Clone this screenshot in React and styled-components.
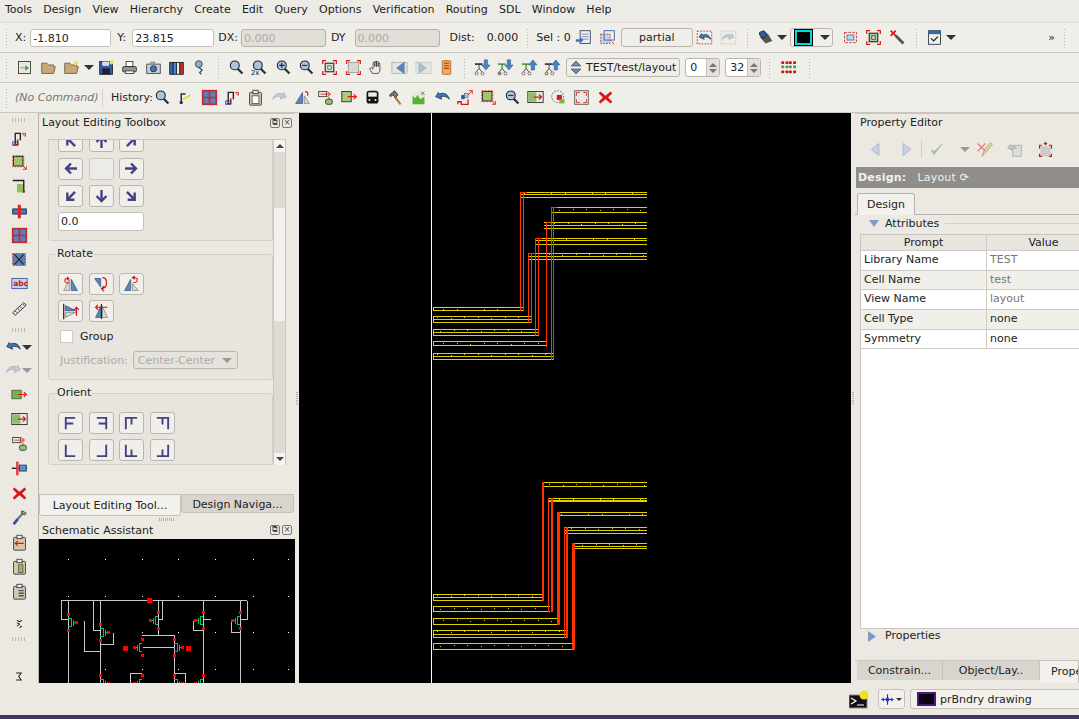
import React from "react";
import styled, { createGlobalStyle } from "styled-components";

const GlobalStyle = createGlobalStyle`
  html, body { margin: 0; padding: 0; overflow: hidden; }
  body { background: #ece9e3; }
  * { box-sizing: border-box; }
`;

const Page = styled.div`
  width: 1079px;
  height: 719px;
  display: flex;
  flex-direction: column;
  background: #ece9e3;
  font-family: "DejaVu Sans", sans-serif;
  font-size: 11px;
  color: #222;
  overflow: hidden;
`;

const MenuBar = styled.div`
  height: 23px;
  display: flex;
  align-items: center;
  gap: 11.2px;
  padding: 0 0 3px 5px;
  background: #ecebe5;
  border-bottom: 1px solid #dcd9d2;
`;

const ToolRow = styled.div`
  height: 30px;
  display: flex;
  align-items: center;
  background: #f0eee8;
  border-bottom: 1px solid #c9c6bf;
  white-space: nowrap;
`;

const Grip = styled.span`
  flex: none;
  width: ${(p) => p.$w || 13}px;
  height: 20px;
  background: radial-gradient(circle at 50% 50%, #b9b6ae 0.8px, transparent 1px);
  background-size: 3px 3px;
  background-position: ${(p) => p.$x || 5}px 0;
  background-repeat: repeat-y;
`;

const IconBtn = styled.span`
  flex: none;
  width: ${(p) => p.$w || 23.5}px;
  height: 22px;
  display: flex;
  align-items: center;
  justify-content: center;
`;

const IconSvg = styled.svg`
  width: ${(p) => p.$s || 17}px;
  height: ${(p) => p.$s || 17}px;
  display: block;
  flex: none;
`;

const Caret = styled.span`
  flex: none;
  width: ${(p) => (p.$small ? 6 : 10)}px;
  height: ${(p) => (p.$small ? 3 : 5)}px;
  margin: 0 1px 0 ${(p) => p.$ml || 0}px;
  border-left: ${(p) => (p.$small ? 3 : 5)}px solid transparent;
  border-right: ${(p) => (p.$small ? 3 : 5)}px solid transparent;
  border-top: ${(p) => (p.$small ? 3 : 5)}px solid ${(p) => (p.$dim ? "#999" : "#333")};
`;

const Text = styled.span`
  flex: none;
  width: ${(p) => (p.$w ? `${p.$w}px` : "auto")};
  margin-left: ${(p) => p.$ml || 0}px;
  color: ${(p) => p.$color || "#222"};
  font-style: ${(p) => (p.$italic ? "italic" : "normal")};
`;

const Field = styled.div`
  flex: none;
  width: ${(p) => p.$w}px;
  height: ${(p) => p.$h || 18}px;
  margin-left: ${(p) => p.$ml || 0}px;
  margin-top: ${(p) => p.$mt || 0}px;
  padding-left: 2px;
  line-height: ${(p) => (p.$h || 18) - 1}px;
  background: ${(p) => (p.$off ? "#e2dfd9" : "#fff")};
  color: ${(p) => (p.$off ? "#aaa" : "#222")};
  border: 1px solid ${(p) => (p.$off ? "#b5b2ab" : "#c4c1ba")};
  border-radius: 3px;
`;

const PushBtn = styled.div`
  flex: none;
  width: ${(p) => p.$w}px;
  height: 19px;
  margin-left: ${(p) => p.$ml || 0}px;
  display: flex;
  align-items: center;
  justify-content: center;
  gap: 4px;
  background: #f0eee9;
  border: 1px solid #b9b6af;
  border-radius: 3px;
`;

const Spin = styled.div`
  flex: none;
  width: ${(p) => p.$w}px;
  height: 19px;
  margin-left: 5px;
  display: flex;
  background: #fff;
  border: 1px solid #b9b6af;
  border-radius: 3px;
  overflow: hidden;
`;

const SpinValue = styled.span`
  flex: 1;
  padding-left: 4px;
  line-height: 17px;
`;

const SpinArrows = styled.span`
  flex: none;
  width: 13px;
  display: flex;
  flex-direction: column;
  align-items: center;
  justify-content: center;
  gap: 2px;
  background: #e4e1db;
  border-left: 1px solid #c4c1ba;

  &::before, &::after {
    content: "";
    border-left: 4px solid transparent;
    border-right: 4px solid transparent;
  }
  &::before { border-bottom: 4px solid #777; }
  &::after { border-top: 4px solid #777; }
`;

const ColorCombo = styled.div`
  flex: none;
  width: 43px;
  height: 19px;
  margin-left: 2px;
  display: flex;
  align-items: center;
  gap: 8px;
  padding-left: 4px;
  background: #f0eee9;
  border: 1px solid #b9b6af;
  border-radius: 3px;
`;

const ColorSwatch = styled.span`
  flex: none;
  width: 17px;
  height: 15px;
  background: #000;
  border: 2px solid #00d8e0;
  outline: 1px solid #000;
`;

const Main = styled.div`
  height: 570px;
  display: flex;
`;

const LeftStrip = styled.div`
  flex: none;
  width: 38px;
  padding-top: 5px;
  display: flex;
  flex-direction: column;
  align-items: center;
  background: #ece9e3;
`;

const StripBtn = styled.div`
  flex: none;
  height: ${(p) => p.$h || 24.3}px;
  margin-top: ${(p) => p.$mt || 0}px;
  display: flex;
  align-items: center;
  justify-content: center;
  width: 100%;
`;

const StripGrip = styled.div`
  flex: none;
  width: 16px;
  height: 4px;
  margin: ${(p) => p.$m};
  background: radial-gradient(circle, #bdbab2 0.8px, transparent 1px) 0 0 / 3px 2px;
`;

const LeftDock = styled.div`
  flex: none;
  width: 257px;
  display: flex;
  flex-direction: column;
  border-left: 1px solid #b7b4ad;
  border-top: 1px solid #c9c6bf;
`;

const DockTitle = styled.div`
  flex: none;
  height: ${(p) => p.$h}px;
  display: flex;
  align-items: center;
  justify-content: space-between;
  padding: 0 3px ${(p) => p.$pb || 0}px ${(p) => p.$pl || 3}px;
`;

const DockBtns = styled.span`
  display: flex;
  gap: 2px;
`;

const DockBtn = styled.span`
  width: 10px;
  height: 10px;
  border: 1px solid #777;
  border-radius: 2px;
  font-size: 8px;
  line-height: 8px;
  text-align: center;
  color: #444;
`;

const ScrollArea = styled.div`
  flex: none;
  width: 238px;
  height: 326px;
  margin-left: 9px;
  display: flex;
  border-top: 1px solid #c9c6bf;
  border-right: 1px solid #c9c6bf;
  overflow: hidden;
`;

const ScrollContent = styled.div`
  flex: none;
  width: 225px;
  height: 100%;
  overflow: hidden;
`;

const ScrollBar = styled.div`
  flex: none;
  width: 12px;
  height: 100%;
  display: flex;
  flex-direction: column;
  background: #dedbd5;
  border-left: 1px solid #c9c6bf;
`;

const ScrollEnd = styled.div`
  flex: none;
  height: 12px;
  display: flex;
  align-items: center;
  justify-content: center;
  background: #f6f4f0;

  &::after {
    content: "";
    border-left: 4px solid transparent;
    border-right: 4px solid transparent;
    ${(p) => (p.$down ? "border-top: 4px solid #444;" : "border-bottom: 4px solid #444;")}
  }
`;

const ScrollThumb = styled.div`
  flex: none;
  height: 113px;
  margin-top: 56px;
  background: #f3f1ec;
`;

const ScrollFill = styled.div`
  flex: 1;
`;

const Group = styled.div`
  position: relative;
  height: ${(p) => p.$h}px;
  margin-top: ${(p) => p.$mt}px;
  padding: ${(p) => p.$pt}px 0 0 9px;
  background: #e8e5df;
  border: 1px solid #d3d0c9;
  border-radius: 3px;
`;

const GroupLabel = styled.span`
  position: absolute;
  left: 7px;
  top: -7px;
  padding: 0 1px;
  line-height: 12px;
  background: #ece9e3;
`;

const BtnGrid = styled.div`
  display: grid;
  grid-template-columns: repeat(${(p) => p.$cols}, 25px);
  grid-auto-rows: 22px;
  gap: ${(p) => p.$gap || 5}px 5.5px;
`;

const SquareBtn = styled.div`
  display: flex;
  align-items: center;
  justify-content: center;
  background: #f1efea;
  border: 1px solid #bab7b0;
  border-radius: 3px;
  opacity: ${(p) => (p.$blank ? 0.6 : 1)};
`;

const Glyph = styled.svg`
  width: 17px;
  height: 17px;
  transform: rotate(${(p) => p.$deg || 0}deg);
`;

const OptionRow = styled.div`
  display: flex;
  align-items: center;
  gap: ${(p) => p.$gap}px;
  margin: ${(p) => p.$m};
  color: ${(p) => p.$color || "#222"};
`;

const CheckBox = styled.span`
  width: 13px;
  height: 13px;
  margin-left: 2px;
  background: #fff;
  border: 1px solid #cfccc5;
`;

const DisabledCombo = styled.div`
  width: 105px;
  height: 18px;
  display: flex;
  align-items: center;
  justify-content: space-between;
  padding: 0 4px;
  color: #aaa;
  background: #e6e3dd;
  border: 1px solid #b9b6af;
  border-radius: 3px;
`;

const TabRow = styled.div`
  flex: none;
  height: 23px;
  margin-top: ${(p) => p.$mt || 0}px;
  display: flex;
  align-items: flex-start;
`;

const Tab = styled.div`
  flex: none;
  width: ${(p) => p.$w}px;
  height: ${(p) => (p.$on ? 22 : 19)}px;
  text-align: center;
  line-height: ${(p) => (p.$on ? 22 : 19)}px;
  background: ${(p) => (p.$on ? "#f3f1ec" : "#d8d5cf")};
  border: 1px solid #c4c1ba;
  border-radius: 0 0 3px 3px;
  white-space: nowrap;
  overflow: hidden;
`;

const VSplitter = styled.div`
  flex: none;
  width: 4px;
  display: flex;
  align-items: center;
  justify-content: center;
  background: #ece9e3;

  &::after {
    content: "";
    width: 2px;
    height: 14px;
    background: repeating-linear-gradient(0deg, #b5b2ab 0 1px, transparent 1px 2px);
  }
`;

const HSplitter = styled.div`
  flex: none;
  height: 4px;
  display: flex;
  align-items: center;
  justify-content: center;

  &::after {
    content: "";
    width: 16px;
    height: 3px;
    background: repeating-linear-gradient(90deg, #b5b2ab 0 1px, transparent 1px 2px);
  }
`;

const Schematic = styled.div`
  flex: 1;
  background: #000;
  overflow: hidden;
`;

const DrawSvg = styled.svg`
  display: block;
  width: 100%;
  height: 100%;
  shape-rendering: crispEdges;
`;

const Canvas = styled.div`
  flex: none;
  width: 552px;
  background: #000;
`;

const RightDock = styled.div`
  flex: none;
  width: 224px;
  display: flex;
  flex-direction: column;
  border-top: 1px solid #c9c6bf;
  overflow: hidden;
`;

const PropTools = styled.div`
  flex: none;
  height: 36px;
  display: flex;
  align-items: center;
  padding-left: 9px;
`;

const PropSpacer = styled.span`
  flex: none;
  width: ${(p) => p.$w}px;
`;

const ThinSep = styled.span`
  flex: none;
  width: 1px;
  height: 18px;
  background: #d0cdc6;
  margin: 0 3px;
`;

const DesignBar = styled.div`
  flex: none;
  width: 223px;
  height: 21px;
  margin-left: 1px;
  display: flex;
  align-items: center;
  gap: 11px;
  padding-left: 2px;
  color: #f2f0ea;
  background: #8f8e8a;
  letter-spacing: 0.2px;
`;

const DesignTabRow = styled.div`
  flex: none;
  height: 27px;
  padding: 5px 0 0 2px;
  border-bottom: 1px solid #b7b4ad;
`;

const DesignTab = styled.div`
  width: 58px;
  height: 22px;
  line-height: 22px;
  text-align: center;
  background: #f3f1ec;
  border: 1px solid #b7b4ad;
  border-bottom: none;
  border-radius: 3px 3px 0 0;
`;

const Pane = styled.div`
  flex: none;
  height: 445px;
  padding: 2px 0 0 5px;
  display: flex;
  flex-direction: column;
`;

const SectionHead = styled.div`
  flex: none;
  display: flex;
  align-items: center;
  gap: ${(p) => p.$gap}px;
  height: ${(p) => p.$h}px;
  padding: 0 0 ${(p) => p.$pb || 0}px ${(p) => p.$pl}px;
  line-height: 12px;

  &::after {
    content: "";
    flex: 1;
    height: ${(p) => (p.$rule ? 1 : 0)}px;
    background: #d3d0c9;
  }
`;

const TableBox = styled.div`
  flex: none;
  width: 240px;
  height: 395px;
  background: #fff;
  border: 1px solid #c9c6bf;
  border-right: none;
`;

const TableRow = styled.div`
  height: ${(p) => (p.$head ? 16 : 19.7)}px;
  display: grid;
  grid-template-columns: 125px 1fr;
  align-items: center;
  background: ${(p) => (p.$head ? "#e8e5df" : p.$alt ? "#f1efea" : "#fff")};
  border-bottom: 1px solid #cfccc5;
`;

const TableCell = styled.div`
  height: 100%;
  line-height: ${(p) => (p.$head ? 15 : 18)}px;
  padding-left: ${(p) => (p.$head ? 0 : 3)}px;
  text-align: ${(p) => (p.$head ? "center" : "left")};
  color: ${(p) => p.$color || "#222"};
  border-left: ${(p) => (p.$split ? "1px solid #cfccc5" : "none")};
`;

const BottomTabs = styled.div`
  flex: none;
  height: 21px;
  display: flex;
  padding-left: 2px;
  border-top: 1px solid #c9c6bf;
`;

const BottomTab = styled.div`
  flex: none;
  width: ${(p) => p.$w}px;
  height: ${(p) => (p.$on ? 22 : 19)}px;
  padding-left: ${(p) => (p.$on ? 11 : 0)}px;
  line-height: ${(p) => (p.$on ? 22 : 20)}px;
  text-align: ${(p) => (p.$on ? "left" : "center")};
  background: ${(p) => (p.$on ? "#f3f1ec" : "#d8d5cf")};
  border-right: 1px solid #c4c1ba;
  white-space: nowrap;
  overflow: hidden;
`;

const StatusBar = styled.div`
  height: 32px;
  display: flex;
  align-items: center;
  justify-content: flex-end;
  background: #ece9e3;
`;

const SmallBtn = styled.div`
  flex: none;
  width: 27px;
  height: 20px;
  margin-left: 9px;
  display: flex;
  align-items: center;
  justify-content: center;
  gap: 1px;
  background: #f3f1ec;
  border: 1px solid #c4c1ba;
  border-radius: 3px;
`;

const LayerCombo = styled.div`
  flex: none;
  width: 169px;
  height: 20px;
  margin-left: 5px;
  display: flex;
  align-items: center;
  gap: 4px;
  padding-left: 6px;
  background: #f3f1ec;
  border: 1px solid #c4c1ba;
  border-right: none;
  border-radius: 3px 0 0 3px;
`;

const LayerSwatch = styled.span`
  flex: none;
  width: 19px;
  height: 14px;
  background: #0c0014;
  border: 2px solid #4a1a78;
`;

const Footer = styled.div`
  flex: none;
  height: 4px;
  background: #40365f;
`;

const mag = (extra) => (
  <>
    <line x1="11" y1="11" x2="17" y2="17" stroke="#333" strokeWidth="2.6" />
    <circle cx="8" cy="7.5" r="5.2" fill="#a9c3dc" stroke="#223" strokeWidth="1.3" />
    {extra}
  </>
);
const corners = (c = "#e01010") => (
  <path d="M2 6V2h4M14 2h4v4M18 14v4h-4M6 18H2v-4" fill="none" stroke={c} strokeWidth="1.4" />
);
const greenBox = <rect x="3" y="3" width="11" height="11" fill="#9cc66a" stroke="#222" />;
const undoShape = (c, s) => (
  <path d="M2 9l3-5 1 2c5-2 10-1 12 6-3-3-6-4-10-3l1 3z" fill={c} stroke={s} strokeWidth="0.8" />
);
const clip = (body) => (
  <>
    <rect x="3" y="4" width="14" height="15" rx="1" fill="#d8c8a8" stroke="#333" />
    <rect x="7" y="1.5" width="6" height="4" fill="#eee" stroke="#333" />
    {body}
  </>
);
// tree with a small bar on top, two leaf circles and a blue arrow
const hier = (bar, leaf, up) => (
  <>
    <path d="M1 6h9" stroke={bar} strokeWidth="2" />
    <path d="M6 6v5M6 11l-3 4M6 11l3 4" stroke="#333" fill="none" />
    <circle cx="3" cy="17" r="1.8" fill={leaf} stroke="#333" strokeWidth="0.7" />
    <circle cx="10" cy="17" r="1.8" fill="none" stroke="#333" strokeWidth="0.7" />
    <path
      d={up ? "M14 1l5 6h-3v6h-4V7H9z" : "M12 1h4v6h3l-5 6-5-6h3z"}
      fill="#4a84c4"
      stroke="#2a5a90"
      strokeWidth="0.6"
    />
  </>
);
// rotate and mirror buttons, blue and grey triangles with a red mark
const tri = (blue, grey) => (
  <>
    <path d={grey} fill="#d8d8d4" stroke="#777" strokeWidth="0.8" />
    <path d={blue} fill="#5a88bc" stroke="#2a4a78" strokeWidth="0.8" />
  </>
);

const ICONS = {
  session: (
    <>
      <rect x="3" y="3" width="14" height="14" fill="#e8e8e0" stroke="#333" />
      <path d="M5 10h6V7l4 3.5-4 3.5v-3H5z" fill="#3ca040" />
    </>
  ),
  folder: <path d="M2 16V5h6l2 2h6v2h2l-2 8H2z" fill="#c9a778" stroke="#6b5a44" />,
  folderStar: (
    <>
      <path d="M2 16V5h6l2 2h6v2h2l-2 8H2z" fill="#c9a778" stroke="#6b5a44" />
      <circle cx="15" cy="5" r="2.5" fill="#f4e040" />
    </>
  ),
  save: (
    <>
      <rect x="2" y="3" width="15" height="15" fill="#2c5ea8" stroke="#123" />
      <rect x="5" y="3" width="8" height="5" fill="#d8e0ec" />
      <rect x="5" y="11" width="9" height="7" fill="#222" />
      <circle cx="16" cy="4" r="2.5" fill="#f4e040" />
    </>
  ),
  print: (
    <>
      <rect x="6" y="3" width="8" height="6" fill="#fff" stroke="#333" />
      <rect x="2" y="9" width="16" height="6" rx="1" fill="#999" stroke="#222" />
      <rect x="5" y="14" width="10" height="3" fill="#fff" stroke="#333" />
    </>
  ),
  camera: (
    <>
      <rect x="2" y="6" width="16" height="11" fill="#c8ccd0" stroke="#445" />
      <rect x="6" y="3" width="6" height="3" fill="#999" />
      <circle cx="10" cy="11.5" r="3.6" fill="#3e78b8" stroke="#123" />
    </>
  ),
  books: (
    <>
      <rect x="2" y="4" width="4" height="14" fill="#3868a8" stroke="#123" />
      <rect x="6" y="4" width="4" height="14" fill="#5080c0" stroke="#123" />
      <rect x="10" y="4" width="4" height="14" fill="#e8e8e8" stroke="#123" />
      <rect x="14" y="4" width="4" height="14" fill="#d02828" stroke="#123" />
    </>
  ),
  ping: (
    <>
      <circle cx="8" cy="6" r="4" fill="#8fb0d0" stroke="#234" />
      <path d="M8 10l4 3-3 3 2 2" fill="none" stroke="#345" strokeWidth="1.4" />
    </>
  ),
  mag: mag(),
  mag2: mag(<text x="0" y="19" fontSize="8" fill="#111" fontFamily="DejaVu Sans">2x</text>),
  magPlus: mag(<path d="M5 7.5h6M8 4.5v6" stroke="#123" strokeWidth="1.2" />),
  magMinus: mag(<path d="M5 7.5h6" stroke="#123" strokeWidth="1.2" />),
  fit: (
    <>
      {corners()}
      <rect x="5" y="5" width="10" height="10" fill="#dde0d0" stroke="#333" strokeWidth="1.4" />
      <rect x="8" y="8" width="4" height="4" fill="#eee" stroke="#555" />
    </>
  ),
  fitRed: (
    <>
      {corners()}
      <rect x="4" y="4" width="12" height="12" fill="#d8d8d4" stroke="#999" />
    </>
  ),
  hand: (
    <path d="M5 17l-3-6 2-1 2 2V4h2v5V3h2v6V3h2v6V5h2v9l-2 3z" fill="#f2ece0" stroke="#333" strokeWidth="0.9" />
  ),
  prev: (
    <>
      <rect x="1" y="4" width="18" height="13" fill="#e4e4e0" stroke="#999" strokeDasharray="2 1" />
      <path d="M16 3v15L6 10.5z" fill="#5b86b4" />
    </>
  ),
  next: (
    <>
      <rect x="1" y="4" width="18" height="13" fill="#e4e4e0" stroke="#bbb" strokeDasharray="2 1" />
      <path d="M4 3v15l10-7.5z" fill="#a8bccc" />
    </>
  ),
  mark: (
    <>
      <rect x="5" y="2" width="10" height="16" rx="1" fill="#e8b060" stroke="#a86820" />
      <path d="M7 5h6M7 8h6M7 11h6" stroke="#d02020" strokeWidth="1.3" />
    </>
  ),
  h1: hier("#333", "#eee", false),
  h2: hier("#50a838", "#78c048", false),
  h3: hier("#50a838", "#eee", true),
  h4: hier("#333", "#c8d868", true),
  wireY: (
    <>
      <path d="M5 17V6h5" fill="none" stroke="#234" strokeWidth="1.8" />
      <path d="M7 12l9-5" stroke="#e8d820" strokeWidth="2" />
      <circle cx="5" cy="16" r="2" fill="#234" />
    </>
  ),
  grid: (
    <>
      <rect x="2" y="2" width="16" height="16" fill="#5a80c0" stroke="#c82828" strokeWidth="2" />
      <path d="M10 2v16M2 10h16" stroke="#c82828" strokeWidth="2" />
    </>
  ),
  pathRed: (
    <>
      <path d="M5 17V4h6v8" fill="none" stroke="#222" strokeWidth="1.6" />
      <path d="M3 17h5v-6" fill="none" stroke="#d01818" strokeWidth="1.6" />
      <path d="M13 4l4 4M17 4h-3M17 4v3" stroke="#d01818" />
      <rect x="2" y="14" width="6" height="4" fill="none" stroke="#2040a0" />
    </>
  ),
  clipBox: clip(<rect x="6" y="8" width="8" height="9" fill="#fff" stroke="#555" />),
  redoGrey: (
    <g transform="translate(20 0) scale(-1 1)">{undoShape("#c0ccd8", "#a0a8b0")}</g>
  ),
  rotate: (
    <>
      {tri("M2 17L10 4v13z", "M12 17h6L12 8z")}
      <path d="M13 3c3 0 4 2 3 5" fill="none" stroke="#d01818" strokeWidth="1.4" />
    </>
  ),
  rot1: (
    <>
      {tri("M11 4v13h7z", "M9 4v13H2z")}
      <path d="M8 8C3 9 2 5 5 3l3 0M6 1l2 2-2 2" fill="none" stroke="#d01818" strokeWidth="1.3" />
    </>
  ),
  rot2: (
    <>
      {tri("M2 3h7v10z", "M11 3l0 0")}
      <path d="M11 2c6 0 7 11 0 13M13 12l-3 3 3 3" fill="none" stroke="#d01818" strokeWidth="1.4" />
    </>
  ),
  rot3: (
    <>
      {tri("M9 4v13H2z", "M11 9v8h7z")}
      <path d="M12 8c6 0 6-6 2-6h-2M14 0l-3 2 3 2" fill="none" stroke="#d01818" strokeWidth="1.3" />
    </>
  ),
  rot4: (
    <>
      {tri("M4 3l12 6H4z", "M4 11h12L4 17z")}
      <path d="M2 1v18" stroke="#222" strokeWidth="1.4" />
      <path d="M17 15V5M14 8l3-3 3 3" fill="none" stroke="#e01010" strokeWidth="1.4" />
    </>
  ),
  rot5: (
    <>
      {tri("M9 4L3 17h6z", "M11 4l6 13h-6z")}
      <path d="M10 1v18" stroke="#222" strokeWidth="1.4" />
      <path d="M3 5h14M6 2L3 5l3 3" fill="none" stroke="#e01010" strokeWidth="1.3" />
    </>
  ),
  copyMove: (
    <>
      <rect x="2" y="3" width="9" height="6" fill="#f0f0e0" stroke="#333" />
      <rect x="10" y="12" width="8" height="6" rx="2" fill="#90c070" stroke="#333" />
      <path d="M4 6h11M12 3l4 3-4 3M14 9v3" stroke="#d81818" fill="none" />
    </>
  ),
  moveBox: (
    <>
      <rect x="1" y="3" width="11" height="12" fill="#a8cc78" stroke="#222" />
      <path d="M8 9h10M15 6l3 3-3 3" stroke="#d81818" fill="none" strokeWidth="1.4" />
    </>
  ),
  moveWide: (
    <>
      <rect x="1" y="3" width="18" height="13" fill="#e8e8e0" stroke="#222" />
      <rect x="2" y="4" width="9" height="11" fill="#8cc060" />
      <path d="M8 9.5h9M14 6.5l3 3-3 3" stroke="#d81818" fill="none" strokeWidth="1.4" />
    </>
  ),
  bus: (
    <>
      <rect x="3" y="2" width="14" height="15" rx="3" fill="#151515" />
      <rect x="5" y="4" width="10" height="5" fill="#eee" />
      <circle cx="6.5" cy="13" r="1.2" fill="#eee" />
      <circle cx="13.5" cy="13" r="1.2" fill="#eee" />
    </>
  ),
  hammer: (
    <>
      <path d="M9 9l7 9" stroke="#b07830" strokeWidth="2.4" />
      <path d="M3 7l6-5 4 5-3 3-3-3-3 2z" fill="#777" stroke="#333" />
    </>
  ),
  greenBars: (
    <>
      <rect x="3" y="3" width="14" height="15" fill="#dfeccf" />
      <path d="M3 18V8l3 3 3-4 3 5 5-3v9z" fill="#58b030" />
      <path d="M13 3l4 4M17 3l-4 4" stroke="#667" />
    </>
  ),
  undo: undoShape("#3a78c0", "#123"),
  undoBox: (
    <>
      <rect x="1.5" y="2.5" width="17" height="15" fill="none" stroke="#d81818" strokeDasharray="2 1.5" />
      <g transform="translate(2 2) scale(.85)">{undoShape("#3a78c0", "#123")}</g>
    </>
  ),
  redoBox: (
    <>
      <rect x="1.5" y="2.5" width="17" height="15" fill="none" stroke="#eaa" strokeDasharray="2 1.5" />
      <g transform="translate(18 2) scale(-.85 .85)">{undoShape("#c0ccd8", "#a0a8b0")}</g>
    </>
  ),
  stretch: (
    <>
      <path d="M1 18V15h4v3h8v-6" fill="none" stroke="#d01818" strokeWidth="1.5" />
      <rect x="5" y="7" width="4" height="5" fill="#3058a0" />
      <rect x="9" y="5" width="4" height="5" fill="#bcd" stroke="#345" strokeWidth="0.6" />
      <path d="M13 7l5-5M14 2h4v4" stroke="#d01818" fill="none" />
    </>
  ),
  selBox: (
    <>
      {greenBox}
      <path d="M2 2h13v13H2z" fill="none" stroke="#d81818" strokeDasharray="2 1.5" />
      <path d="M13 13l5 5M18 14v4h-4" stroke="#d81818" fill="none" />
    </>
  ),
  corner: (
    <>
      <path d="M2 3h13v14" fill="none" stroke="#222" strokeWidth="1.6" />
      <rect x="7" y="7" width="7" height="10" fill="#8cc060" />
      <circle cx="15" cy="16" r="1.5" fill="#d81818" />
    </>
  ),
  split: (
    <>
      <rect x="2" y="7" width="16" height="6" fill="#4a78b8" stroke="#123" />
      <rect x="8" y="2" width="3.6" height="16" fill="#e82020" />
    </>
  ),
  xbox: (
    <>
      <rect x="2" y="3" width="15" height="14" fill="#5a80b8" strokeDasharray="2 1.5" stroke="#d81818" />
      <path d="M4 4l11 12M15 4L4 16" stroke="#223" strokeWidth="1.4" />
    </>
  ),
  abc: (
    <>
      <rect x="1" y="4" width="18" height="12" fill="#c4d4ec" stroke="#3058a0" />
      <text x="2.5" y="13.5" fontSize="9" fontWeight="700" fill="#c81818" fontFamily="DejaVu Sans">abc</text>
    </>
  ),
  ruler: (
    <>
      <path d="M2 15L15 3l3 3L5 18z" fill="#e8e8e8" stroke="#222" />
      <path d="M5 13l2 2M8 10l2 2M11 8l2 2M14 5l2 2" stroke="#222" />
    </>
  ),
  green: (
    <>
      <rect x="1" y="5" width="11" height="10" fill="#70b840" stroke="#555" />
      <path d="M8 10h10M15 7l3 3-3 3" stroke="#d81818" fill="none" strokeWidth="1.4" />
    </>
  ),
  align: (
    <>
      <rect x="1" y="9" width="18" height="1.5" fill="#111" />
      <rect x="6" y="2" width="3" height="16" fill="#e04040" />
      <rect x="10" y="6" width="8" height="7" fill="#5a90d0" stroke="#235" />
    </>
  ),
  redX: <path d="M4 3l6 5 6-5 2 2-5 5 5 5-2 2-6-5-6 5-2-2 5-5-5-5z" fill="#d81818" />,
  wrench: (
    <>
      <path d="M4 16L15 4" stroke="#777" strokeWidth="2.6" />
      <path d="M3 18l5-6" stroke="#2850a0" strokeWidth="3" />
      <path d="M13 2l5 3-2 2-4-3z" fill="#aaa" stroke="#333" />
    </>
  ),
  wrenchX: (
    <>
      <path d="M8 8l9 9" stroke="#555" strokeWidth="3.4" />
      <path d="M2 2l6 6M8 2L2 8" stroke="#d81818" strokeWidth="2" />
    </>
  ),
  clipRed: clip(<path d="M5 11h10M8 8l-3 3 3 3" stroke="#d81818" fill="none" strokeWidth="1.4" />),
  clipGreen: clip(<rect x="9" y="8" width="5" height="9" fill="#90c060" stroke="#555" />),
  clipBlue: clip(<path d="M9 9h6M9 12h6M9 15h6" stroke="#2858a8" strokeWidth="1.6" />),
  chevron: <path d="M7 6l3 2 3-2M7 9l3 2-3 2M10 15l3-2" fill="none" stroke="#222" strokeWidth="1.2" />,
  chevron2: <path d="M6 6h6l-3 4 3 4H6" fill="none" stroke="#222" strokeWidth="1.2" />,
  docArrows: (
    <>
      <rect x="6" y="2" width="12" height="15" fill="#e8eef4" stroke="#345" />
      <path d="M8 6h8M8 9h8M8 12h8" stroke="#789" />
      <path d="M1 12h5V9l4 4-4 4v-2H1z" fill="#3a78c0" />
    </>
  ),
  dashBlue: (
    <>
      <rect x="2" y="6" width="11" height="11" fill="#c0d4ec" stroke="#d81818" strokeDasharray="2 1.5" />
      <rect x="6" y="2" width="12" height="11" fill="none" stroke="#2858a8" />
      <path d="M15 15l3 3" stroke="#d81818" />
    </>
  ),
  layers: (
    <>
      <path d="M3 9l7 8 8-3-5-8z" fill="#555" />
      <path d="M3 4l5-2 4 4-4 5-5-4z" fill="#2f5f9e" stroke="#123" />
    </>
  ),
  dashSmall: (
    <>
      <rect x="3" y="4" width="14" height="12" fill="none" stroke="#d81818" strokeDasharray="3 1.5" />
      <rect x="6" y="7" width="8" height="6" fill="#bcd4ec" stroke="#4878b0" />
    </>
  ),
  fitGreen: (
    <>
      {corners()}
      <rect x="5" y="5" width="10" height="10" fill="#b0cc88" stroke="#333" strokeWidth="1.4" />
      <rect x="8" y="8" width="4" height="4" fill="#eee" stroke="#333" />
    </>
  ),
  check: (
    <>
      <rect x="3" y="2" width="14" height="16" fill="#f0f0e8" stroke="#234" />
      <rect x="3" y="2" width="14" height="4" fill="#3868a8" />
      <path d="M6 11l3 3 5-5" fill="none" stroke="#222" strokeWidth="1.5" />
    </>
  ),
  circleSel: (
    <>
      <circle cx="9" cy="9" r="7" fill="#eee" stroke="#555" strokeDasharray="2 1.5" />
      <rect x="8" y="7" width="6" height="6" fill="#d81818" />
      <rect x="11" y="12" width="6" height="5" fill="#78b840" />
    </>
  ),
  expand: (
    <>
      <rect x="2" y="2" width="16" height="16" fill="#e8e8e2" stroke="#555" />
      <path d="M4 8V4h4M12 4h4v4M16 12v4h-4M8 16H4v-4" fill="none" stroke="#d81818" />
    </>
  ),
  dots: (
    <>
      {[3, 8, 12, 17].map((x) =>
        [4, 9, 15].map((y) => (
          <rect key={`${x}-${y}`} x={x - 1.5} y={y - 1.5} width="3.4" height="3.4" rx="1" fill={y === 9 ? "#50a040" : "#c81818"} />
        ))
      )}
    </>
  ),
  navBack: <path d="M14 3v14L5 10z" fill="#c4d4e4" stroke="#a8b4c0" />,
  navFwd: <path d="M6 3v14l9-7z" fill="#c4d4e4" stroke="#a8b4c0" />,
  tick: <path d="M4 11l3 5 9-12-8 8z" fill="#a0c090" stroke="#7a9" strokeWidth="0.6" />,
  penX: (
    <>
      <path d="M7 18l3-8 7-8 2 2-7 9z" fill="#e8d890" stroke="#999" />
      <path d="M2 3l9 9M11 3l-9 9" stroke="#e08080" strokeWidth="1.6" />
    </>
  ),
  copyGrey: (
    <>
      <rect x="8" y="5" width="10" height="13" fill="#ddd" stroke="#aaa" />
      <path d="M2 8l3-4 1 2c3-1 5 0 6 3l-6-1 1 3z" fill="#c8ccd0" stroke="#aaa" />
    </>
  ),
  target: (
    <>
      <rect x="4" y="6" width="12" height="12" fill="#ccc" />
      <path d="M3 9V5h3M14 5h3v4M17 15v3h-3M6 18H3v-3M10 1v4M8 3h4" fill="none" stroke="#e01010" strokeWidth="1.4" />
    </>
  ),
  terminal: (
    <>
      <rect x="0" y="6" width="18" height="13" fill="#111" stroke="#888" />
      <path d="M2 9l5 3-5 3M8 16h7" stroke="#fff" fill="none" strokeWidth="1.2" />
      <circle cx="15" cy="6" r="4.5" fill="#f0e020" />
    </>
  ),
  move: (
    <>
      <path d="M2 10h16M10 3v14" stroke="#2030d0" strokeWidth="1.6" />
      <path d="M10 6l-3 4 3 4 3-4z" fill="#2030d0" />
      <path d="M5 7l-3 3 3 3M15 7l3 3-3 3" fill="#2030d0" />
    </>
  ),
};

function Icon({ name, size }) {
  return <IconSvg viewBox="0 0 20 20" $s={size}>{ICONS[name]}</IconSvg>;
}

const Btn = ({ name, w }) => (
  <IconBtn $w={w}>
    <Icon name={name} />
  </IconBtn>
);

const MENUS = ["Tools", "Design", "View", "Hierarchy", "Create", "Edit", "Query", "Options", "Verification", "Routing", "SDL", "Window", "Help"];

const ROW2A = ["session", "folder", "folderStar"];
const ROW2B = ["save", "print", "camera", "books", "ping"];
const ROW2C = ["mag", "mag2", "magPlus", "magMinus", "fit", "fitRed", "hand", "prev", "next", "mark"];
const ROW2D = ["h1", "h2", "h3", "h4"];
const ROW3 = ["mag", "wireY", "grid", "pathRed", "clipBox", "redoGrey", "rotate", "copyMove", "moveBox", "bus", "hammer", "greenBars", "undo", "stretch", "selBox", "magMinus", "moveWide", "circleSel", "expand", "redX"];

const STRIP_A = ["pathRed", "selBox", "corner", "split", "grid", "xbox", "abc", "ruler"];
const STRIP_B = ["green", "moveWide", "copyMove", "align", "redX", "wrench", "clipRed", "clipGreen", "clipBlue"];

const ARROW = "M8.5 15V4M3.5 9l5-5 5 5";
const ORIENT = [
  "M4 15V3h10M4 9h8",
  "M14 15V3H4M14 9H6",
  "M3 15V3h12M9 3v7",
  "M15 15V3H3M9 3v7",
  "M4 3v12h10",
  "M14 3v12H4",
  "M3 3v12h12M9 15V8",
  "M15 3v12H3M9 15V8",
];
const ROTATE_BTNS = ["rot1", "rot2", "rot3", "rot4", "rot5"];

const rowY = (v) => Math.round(v) + 0.5;

// bus wires of the two routed groups, left and right stubs
const WIRES = [
  { x1: 520, x2: 647, ys: [192, 194, 197] },
  { x1: 552, x2: 647, ys: [207, 212] },
  { x1: 544, x2: 647, ys: [222, 225, 228] },
  { x1: 535, x2: 647, ys: [238, 240, 244] },
  { x1: 528, x2: 647, ys: [253, 256, 259] },
  { x1: 433, x2: 523, ys: [307, 310] },
  { x1: 433, x2: 531, ys: [316, 319, 322] },
  { x1: 433, x2: 538, ys: [329, 332, 335] },
  { x1: 433, x2: 546, ys: [341, 345] },
  { x1: 433, x2: 553, ys: [353, 356, 359] },
  { x1: 542, x2: 647, ys: [482, 486] },
  { x1: 549, x2: 647, ys: [498, 500, 501] },
  { x1: 557, x2: 647, ys: [512, 515] },
  { x1: 564, x2: 647, ys: [527, 530, 533] },
  { x1: 572, x2: 647, ys: [543, 546, 548] },
  { x1: 433, x2: 543, ys: [594, 597, 600] },
  { x1: 433, x2: 550, ys: [606, 611] },
  { x1: 433, x2: 559, ys: [618, 624] },
  { x1: 433, x2: 566, ys: [630, 634, 637] },
  { x1: 433, x2: 574, ys: [643, 649] },
];

const STRAPS = [
  { x: 520, y1: 192, y2: 310 }, { x: 523, y1: 192, y2: 310 },
  { x: 528, y1: 253, y2: 322 }, { x: 531, y1: 253, y2: 322 },
  { x: 535, y1: 238, y2: 335 }, { x: 538, y1: 238, y2: 335 },
  { x: 546, y1: 222, y2: 346 },
  { x: 551, y1: 207, y2: 359 }, { x: 553, y1: 207, y2: 359 },
  { x: 542, y1: 482, y2: 600, w: 2 },
  { x: 548, y1: 498, y2: 611 }, { x: 551, y1: 498, y2: 611, w: 2 },
  { x: 557, y1: 512, y2: 624, w: 2 }, { x: 559, y1: 512, y2: 624 },
  { x: 564, y1: 527, y2: 637 }, { x: 566, y1: 527, y2: 637, w: 2 },
  { x: 572, y1: 543, y2: 649, w: 2 }, { x: 574, y1: 543, y2: 649 },
];

function wireDots() {
  let d = "";
  WIRES.forEach((w, i) => {
    const y = w.ys[0] + (w.ys.length > 2 ? 1 : 2);
    for (let x = w.x1 + 4 + (i % 3) * 3; x < w.x2 - 2; x += 13.5) {
      const jitter = Math.floor(x / 13.5 + i) % 3 === 0 ? 1 : 0;
      d += `M${Math.round(x)} ${y + jitter + 0.5}h1.4`;
    }
  });
  return d;
}

function LayoutDrawing() {
  return (
    <DrawSvg viewBox="299 113 552 570">
      <line x1="431.5" y1="113" x2="431.5" y2="683" stroke="#fff" />
      {WIRES.map((w) => (
        <g key={`${w.x1}-${w.ys[0]}`} stroke="#e0d000">
          {w.ys.map((y) => (
            <line key={y} x1={w.x1} x2={w.x2} y1={rowY(y)} y2={rowY(y)} />
          ))}
          {w.x1 === 433 && <line x1="433.5" x2="433.5" y1={w.ys[0]} y2={w.ys[w.ys.length - 1] + 1} />}
        </g>
      ))}
      <path d={wireDots()} stroke="#e0d000" />
      {STRAPS.map((s) => (
        <line
          key={`${s.x}-${s.y1}`}
          x1={s.x + 0.5}
          x2={s.x + 0.5}
          y1={s.y1}
          y2={s.y2 + 1}
          stroke="#ff3300"
          strokeWidth={s.w || 1}
        />
      ))}
      {STRAPS.filter((s) => s.y1 < 300).map((s) => (
        <line key={`t${s.x}`} x1={s.x} x2={s.x + 4} y1={s.y1 + 0.5} y2={s.y1 + 0.5} stroke="#ff3300" />
      ))}
    </DrawSvg>
  );
}

const GRID_X = [67, 104, 141, 177, 214, 252, 287];
const GRID_Y = [559, 596, 632, 669];
const NETS = [
  "M60 600H246", "M60 600V619H67", "M67 600V683", "M92 600V630H99", "M99 600V683", "M83 620V651H99",
  "M112 632V644H99", "M157 600V635", "M161 600V619H157", "M141 635H173V683", "M142 647H173",
  "M202 600V683", "M202 619H210", "M192 620V630H202", "M239 600V683", "M246 600V619H239", "M230 620V632H239",
  "M129 683V673H141", "M173 673H184V683",
];
const TRANSISTORS = [
  [67, 622, 1], [99, 632, 1], [157, 620, -1], [202, 620, -1], [239, 620, -1],
  [141, 647, -1], [173, 647, 1], [141, 683, -1], [173, 683, 1], [99, 683, 1], [202, 683, -1],
];

function SchematicDrawing() {
  return (
    <DrawSvg viewBox="39 539 255 144">
      {GRID_X.map((x) => GRID_Y.map((y) => <rect key={`${x}-${y}`} x={x} y={y} width="1" height="1" fill="#fff" />))}
      {NETS.map((d) => <path key={d} d={d} transform="translate(.5 .5)" fill="none" stroke="#c6c8cc" />)}
      {TRANSISTORS.map(([x, y, s]) => (
        <g key={`${x}-${y}`}>
          <path
            d={`M${x} ${y - 4}h${3 * s}v8h${-3 * s}M${x + 5 * s} ${y - 3}v6M${x + 5 * s} ${y}h${3 * s}`}
            fill="none"
            stroke="#00c860"
            transform="translate(.5 .5)"
          />
          <rect x={x - 1} y={y - 9} width="3" height="3" fill="#ff0000" />
          <rect x={x - 1} y={y + 7} width="3" height="3" fill="#ff0000" />
          <rect x={x + 8 * s - 1} y={y - 1} width="3" height="3" fill="#ff0000" />
        </g>
      ))}
      <rect x="146" y="598" width="6" height="5" rx="2" fill="#ff0000" />
      <rect x="122" y="646" width="5" height="5" fill="#ff0000" />
      <rect x="185" y="646" width="5" height="5" fill="#ff0000" />
    </DrawSvg>
  );
}

const PROPS = [
  ["Library Name", "TEST", "#777"],
  ["Cell Name", "test", "#777"],
  ["View Name", "layout", "#777"],
  ["Cell Type", "none", "#222"],
  ["Symmetry", "none", "#222"],
];

export default function App() {
  return (
    <Page>
      <GlobalStyle />
      <MenuBar>
        {MENUS.map((m) => <span key={m}>{m}</span>)}
      </MenuBar>

      <ToolRow>
        <Grip />
        <Text $ml={2}>X:</Text>
        <Field $w={81} $ml={4}>-1.810</Field>
        <Text $ml={6}>Y:</Text>
        <Field $w={82} $ml={6}>23.815</Field>
        <Text $ml={4}>DX:</Text>
        <Field $w={85} $ml={3} $off>0.000</Field>
        <Text $ml={5}>DY</Text>
        <Field $w={85} $ml={9} $off>0.000</Field>
        <Text $ml={10}>Dist:</Text>
        <Text $ml={12}>0.000</Text>
        <Grip $w={18} $x={8} />
        <Text>Sel : 0</Text>
        <PropSpacer $w={1} />
        <Btn name="docArrows" />
        <Btn name="dashBlue" />
        <PushBtn $w={72} $ml={2}>partial</PushBtn>
        <Btn name="undoBox" />
        <Btn name="redoBox" />
        <Grip $w={14} $x={6} />
        <Btn name="layers" />
        <Caret />
        <ColorCombo>
          <ColorSwatch />
          <Caret />
        </ColorCombo>
        <PropSpacer $w={5} />
        <Btn name="dashSmall" />
        <Btn name="fitGreen" />
        <Btn name="wrenchX" />
        <Grip $w={14} $x={6} />
        <Btn name="check" />
        <Caret />
        <Text $ml={91}>»</Text>
        <Grip $w={15} $x={8} />
      </ToolRow>

      <ToolRow>
        <Grip />
        {ROW2A.map((n) => <Btn key={n} name={n} />)}
        <Caret />
        {ROW2B.map((n) => <Btn key={n} name={n} />)}
        <Grip $w={13} $x={5} />
        {ROW2C.map((n) => <Btn key={n} name={n} w={23.3} />)}
        <Grip $w={13} $x={5} />
        {ROW2D.map((n) => <Btn key={n} name={n} w={23.3} />)}
        <PushBtn $w={114} $ml={2}>
          <svg width="12" height="15" viewBox="0 0 12 15">
            <path d="M6 1l5 5H1zM6 14l5-5H1z" fill="#6a8cb0" stroke="#345" strokeWidth="0.6" />
          </svg>
          TEST/test/layout
        </PushBtn>
        <Spin $w={35}><SpinValue>0</SpinValue><SpinArrows /></Spin>
        <Spin $w={36}><SpinValue>32</SpinValue><SpinArrows /></Spin>
        <Grip $w={16} $x={7} />
        <Btn name="dots" />
        <Grip $w={14} $x={7} />
      </ToolRow>

      <ToolRow>
        <Grip />
        <Text $ml={2} $w={84} $italic $color="#777">(No Command)</Text>
        <ThinSep />
        <Text $ml={5} $w={40}>History:</Text>
        {ROW3.map((n, i) => <Btn key={`${n}${i}`} name={n} w={23.3} />)}
      </ToolRow>

      <Main>
        <LeftStrip>
          <StripGrip $m="0 0 4px" />
          {STRIP_A.map((n) => <StripBtn key={n}><Icon name={n} /></StripBtn>)}
          <StripGrip $m="8px 0 3px" />
          <StripBtn $h={23.5}><Icon name="undo" /><Caret /></StripBtn>
          <StripBtn $h={23.5}><Icon name="redoGrey" /><Caret $dim /></StripBtn>
          {STRIP_B.map((n) => <StripBtn key={n} $h={24.6}><Icon name={n} /></StripBtn>)}
          <StripBtn $h={26} $mt={7}><Icon name="chevron" /></StripBtn>
          <StripGrip $m="0 0 26px" />
          <StripBtn $h={20}><Icon name="chevron2" /></StripBtn>
        </LeftStrip>

        <LeftDock>
          <DockTitle $h={25} $pb={8}>
            <span>Layout Editing Toolbox</span>
            <DockBtns><DockBtn>⧉</DockBtn><DockBtn>×</DockBtn></DockBtns>
          </DockTitle>
          <ScrollArea>
            <ScrollContent>
              <Group $h={112} $mt={-11} $pt={0}>
                <BtnGrid $cols={3} $gap={5.5}>
                  {[-45, 0, 45, -90, null, 90, -135, 180, 135].map((deg, i) => (
                    <SquareBtn key={i} $blank={deg === null}>
                      {deg !== null && (
                        <Glyph viewBox="0 0 17 17" $deg={deg}>
                          <path d={ARROW} fill="none" stroke="#4a3f86" strokeWidth="2.4" />
                        </Glyph>
                      )}
                    </SquareBtn>
                  ))}
                </BtnGrid>
                <Field $w={86} $h={19} $mt={5}>0.0</Field>
              </Group>

              <Group $h={126} $mt={13} $pt={18}>
                <GroupLabel>Rotate</GroupLabel>
                <BtnGrid $cols={3}>
                  {ROTATE_BTNS.map((n) => (
                    <SquareBtn key={n}><Icon name={n} /></SquareBtn>
                  ))}
                </BtnGrid>
                <OptionRow $m="8px 0 0" $gap={7}>
                  <CheckBox />
                  <span>Group</span>
                </OptionRow>
                <OptionRow $m="8px 0 0 2px" $gap={5} $color="#aaa">
                  <span>Justification:</span>
                  <DisabledCombo>Center-Center<Caret $dim /></DisabledCombo>
                </OptionRow>
              </Group>

              <Group $h={72} $mt={13} $pt={18}>
                <GroupLabel>Orient</GroupLabel>
                <BtnGrid $cols={4}>
                  {ORIENT.map((d) => (
                    <SquareBtn key={d}>
                      <Glyph viewBox="0 0 18 18">
                        <path d={d} fill="none" stroke="#4a3f86" strokeWidth="2" />
                      </Glyph>
                    </SquareBtn>
                  ))}
                </BtnGrid>
              </Group>
            </ScrollContent>
            <ScrollBar>
              <ScrollEnd />
              <ScrollThumb />
              <ScrollFill />
              <ScrollEnd $down />
            </ScrollBar>
          </ScrollArea>

          <TabRow $mt={29}>
            <Tab $w={142} $on>Layout Editing Tool...</Tab>
            <Tab $w={113}>Design Naviga...</Tab>
          </TabRow>
          <HSplitter />
          <DockTitle $h={18}>
            <span>Schematic Assistant</span>
            <DockBtns><DockBtn>⧉</DockBtn><DockBtn>×</DockBtn></DockBtns>
          </DockTitle>
          <Schematic><SchematicDrawing /></Schematic>
        </LeftDock>

        <VSplitter />
        <Canvas><LayoutDrawing /></Canvas>
        <VSplitter />

        <RightDock>
          <DockTitle $h={17} $pl={5}>
            <span>Property Editor</span>
          </DockTitle>
          <PropTools>
            <Btn name="navBack" />
            <PropSpacer $w={7} />
            <Btn name="navFwd" />
            <ThinSep />
            <Btn name="tick" />
            <Caret $dim $ml={11} />
            <PropSpacer $w={2} />
            <Btn name="penX" />
            <PropSpacer $w={7} />
            <Btn name="copyGrey" />
            <PropSpacer $w={7} />
            <Btn name="target" />
          </PropTools>
          <DesignBar>
            <b>Design:</b>
            <span>Layout ⟳</span>
          </DesignBar>
          <DesignTabRow><DesignTab>Design</DesignTab></DesignTabRow>
          <Pane>
            <SectionHead $h={17} $pb={4} $pl={9} $gap={6} $rule>
              <svg width="10" height="7" viewBox="0 0 10 7"><path d="M0 0h10L5 7z" fill="#7c9cc8" /></svg>
              Attributes
            </SectionHead>
            <TableBox>
              <TableRow $head>
                <TableCell $head>Prompt</TableCell>
                <TableCell $head $split>Value</TableCell>
              </TableRow>
              {PROPS.map(([k, v, c], i) => (
                <TableRow key={k} $alt={i % 2 === 1}>
                  <TableCell>{k}</TableCell>
                  <TableCell $split $color={c}>{v}</TableCell>
                </TableRow>
              ))}
            </TableBox>
            <SectionHead $h={14} $pl={8} $gap={9}>
              <svg width="8" height="11" viewBox="0 0 8 11"><path d="M0 0l8 5.5L0 11z" fill="#7c9cc8" /></svg>
              Properties
            </SectionHead>
          </Pane>
          <BottomTabs>
            <BottomTab $w={86}>Constrain...</BottomTab>
            <BottomTab $w={97}>Object/Lay..</BottomTab>
            <BottomTab $w={39} $on>Prope</BottomTab>
          </BottomTabs>
        </RightDock>
      </Main>

      <StatusBar>
        <Icon name="terminal" size={20} />
        <SmallBtn><Icon name="move" size={15} /><Caret $small /></SmallBtn>
        <LayerCombo>
          <LayerSwatch />
          prBndry drawing
        </LayerCombo>
      </StatusBar>
      <Footer />
    </Page>
  );
}
